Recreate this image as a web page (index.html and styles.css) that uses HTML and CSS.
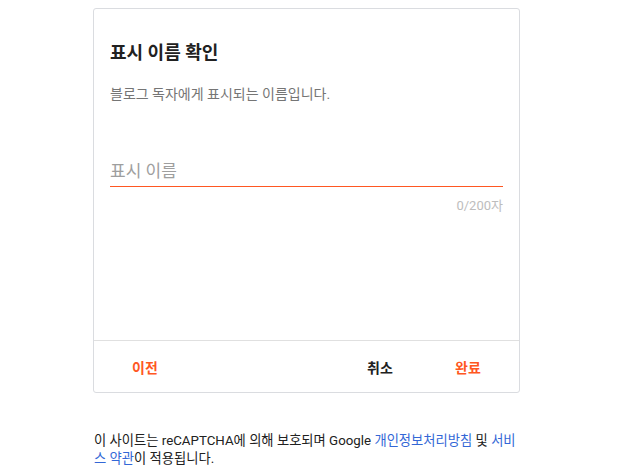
FILE: index.html
```html
<!DOCTYPE html>
<html lang="ko">
<head>
<meta charset="utf-8">
<link rel="stylesheet" href="styles.css">
</head>
<body>
<div class="page">
  <div class="card">
    <div class="card-body">
      <h2 class="title">표시 이름 확인</h2>
      <p class="subtitle">블로그 독자에게 표시되는 이름입니다.</p>
      <div class="field">
        <div class="input">표시 이름</div>
      </div>
      <div class="counter">0/200자</div>
    </div>
    <div class="actions">
      <button class="btn accent">이전</button>
      <div class="spacer"></div>
      <button class="btn dark">취소</button>
      <button class="btn accent">완료</button>
    </div>
  </div>
  <p class="notice">이 사이트는 reCAPTCHA에 의해 보호되며 Google <a href="#">개인정보처리방침</a> 및 <a href="#">서비스 약관</a>이 적용됩니다.</p>
</div>
</body>
</html>
```
FILE: styles.css
```css
html, body {
  margin: 0;
  padding: 0;
  background: #fff;
}
body {
  font-family: Roboto, "Noto Sans CJK KR", sans-serif;
  color: #212121;
}
.page {
  width: 427px;
  margin-left: 93px;
  padding-top: 8px;
}
.card {
  box-sizing: border-box;
  height: 385px;
  border: 1px solid #dadce0;
  border-radius: 3px;
  display: flex;
  flex-direction: column;
}
.card-body {
  flex: 1;
  padding: 32px 16px 0;
}
.title {
  margin: 0;
  font-size: 18px;
  line-height: 24px;
  font-weight: 700;
  color: #212121;
}
.subtitle {
  margin: 19px 0 0;
  font-size: 14px;
  line-height: 20px;
  color: #757575;
}
.field {
  margin-top: 55px;
  border-bottom: 1px solid #ff5722;
  padding-bottom: 3px;
}
.input {
  font-size: 17px;
  line-height: 24px;
  color: #9e9e9e;
}
.counter {
  margin-top: 11px;
  text-align: right;
  font-size: 13px;
  line-height: 16px;
  color: #bdbdbd;
}
.actions {
  height: 51px;
  border-top: 1px solid #e0e0e0;
  display: flex;
  align-items: center;
  padding: 0 19px;
  gap: 24px;
}
.spacer {
  flex: 1;
}
.btn {
  width: 64px;
  height: 36px;
  padding: 0;
  border: none;
  background: none;
  font-family: Roboto, "Noto Sans CJK KR", sans-serif;
  font-size: 14px;
  font-weight: 700;
  cursor: pointer;
}
.btn.accent {
  color: #ff5722;
}
.btn.dark {
  color: #212121;
}
.notice {
  margin: 39px 0 0 1px;
  font-size: 13.3px;
  line-height: 18px;
  color: #212121;
}
.notice a {
  color: #3367d6;
  text-decoration: none;
}
```
